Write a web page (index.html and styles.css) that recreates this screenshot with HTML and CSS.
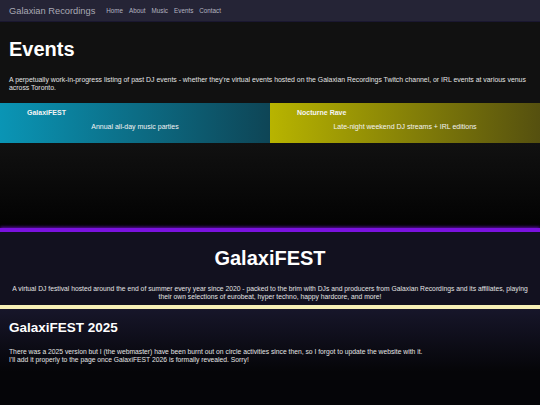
FILE: index.html
```html
<!DOCTYPE html>
<html lang="en">
<head>
  <meta charset="UTF-8">
  <meta name="viewport" content="width=device-width, initial-scale=1.0">
  <title>Events - Galaxian Recordings</title>
  <link rel="stylesheet" href="styles.css">
</head>
<body>
  <header class="topbar">
    <a class="logo" href="#">Galaxian Recordings</a>
    <nav class="nav">
      <a href="#">Home</a>
      <a href="#">About</a>
      <a href="#">Music</a>
      <a href="#">Events</a>
      <a href="#">Contact</a>
    </nav>
  </header>

  <section class="intro">
    <h1>Events</h1>
    <p>A perpetually work-in-progress listing of past DJ events - whether they're virtual events hosted on the Galaxian Recordings Twitch channel, or IRL events at various venus across Toronto.</p>
  </section>

  <div class="cards">
    <a class="card card-fest" href="#galaxifest">
      <span class="card-title">GalaxiFEST</span>
      <span class="card-desc">Annual all-day music parties</span>
    </a>
    <a class="card card-rave" href="#nocturne">
      <span class="card-title">Nocturne Rave</span>
      <span class="card-desc">Late-night weekend DJ streams + IRL editions</span>
    </a>
  </div>

  <div class="spacer"></div>

  <section class="event-head" id="galaxifest">
    <h2>GalaxiFEST</h2>
    <p>A virtual DJ festival hosted around the end of summer every year since 2020 - packed to the brim with DJs and producers from Galaxian Recordings and its affiliates, playing their own selections of eurobeat, hyper techno, happy hardcore, and more!</p>
  </section>

  <section class="edition">
    <h3>GalaxiFEST 2025</h3>
    <p>There was a 2025 version but I (the webmaster) have been burnt out on circle activities since then, so I forgot to update the website with it.<br>
    I'll add it properly to the page once GalaxiFEST 2026 is formally revealed. Sorry!</p>
  </section>
</body>
</html>
```

FILE: styles.css
```css
body {
  margin: 0;
  font-family: "Liberation Sans", Arial, sans-serif;
  background-color: #111;
  color: #ddd;
}
a {
  text-decoration: none;
}

.topbar {
  display: flex;
  align-items: center;
  height: 21px;
  padding: 0 9px;
  background-color: #252436;
  border-bottom: 1px solid #1a1730;
}
.logo {
  font-size: 9.3px;
  color: #a9a9b4;
  margin-right: 11px;
}
.nav {
  display: flex;
  gap: 6px;
}
.nav a {
  font-size: 6.3px;
  color: #b4b4c0;
}

.intro {
  padding: 16px 9px 0;
}
.intro h1 {
  margin: 0;
  font-size: 20px;
  color: #fff;
}
.intro p {
  margin: 15px 0 0;
  font-size: 6.9px;
  line-height: 8px;
  color: #e4e4e4;
}

.cards {
  display: flex;
  margin-top: 11px;
}
.card {
  flex: 1;
  height: 40px;
  display: flex;
  flex-direction: column;
  color: #f4f4f4;
}
.card-fest {
  background: linear-gradient(to right, #0a95b5, #0e4556);
}
.card-rave {
  background: linear-gradient(to right, #b8b400, #55500f);
}
.card-title {
  font-size: 7px;
  font-weight: bold;
  padding: 6px 0 0 27px;
}
.card-desc {
  font-size: 7px;
  text-align: center;
  margin-top: 7px;
}

.spacer {
  height: 85px;
  background: linear-gradient(#111, #020202);
}

.event-head {
  background-color: #12111f;
  border-top: 4px solid #7a12df;
  box-shadow: 0 -1px 3px #5a0fa8;
  padding: 15px 9px 4px;
  text-align: center;
}
.event-head h2 {
  margin: 0;
  font-size: 20px;
  color: #fff;
}
.event-head p {
  margin: 15px 0 0;
  font-size: 6.75px;
  line-height: 8px;
  color: #e4e4e4;
}

.edition {
  border-top: 4px solid #f6f0b6;
  background: linear-gradient(#17162a, #050508 60%);
  padding: 11px 9px 50px;
}
.edition h3 {
  margin: 0;
  font-size: 13.5px;
  color: #fff;
}
.edition p {
  margin: 13px 0 0;
  font-size: 6.75px;
  line-height: 8px;
  color: #e4e4e4;
}
```
